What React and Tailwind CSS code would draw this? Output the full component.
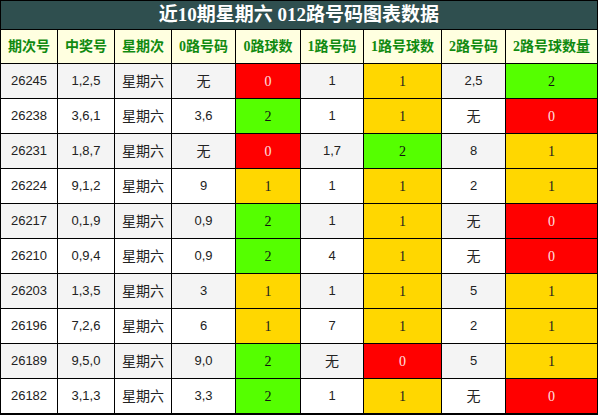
import React from "react";

const rows = [
  ["26245", "1,2,5", "无", 0, "1", 1, "2,5", 2],
  ["26238", "3,6,1", "3,6", 2, "1", 1, "无", 0],
  ["26231", "1,8,7", "无", 0, "1,7", 2, "8", 1],
  ["26224", "9,1,2", "9", 1, "1", 1, "2", 1],
  ["26217", "0,1,9", "0,9", 2, "1", 1, "无", 0],
  ["26210", "0,9,4", "0,9", 2, "4", 1, "无", 0],
  ["26203", "1,3,5", "3", 1, "1", 1, "5", 1],
  ["26196", "7,2,6", "6", 1, "7", 1, "2", 1],
  ["26189", "9,5,0", "9,0", 2, "无", 0, "5", 1],
  ["26182", "3,1,3", "3,3", 2, "1", 1, "无", 0],
];

const headers = ["期次号", "中奖号", "星期次", "0路号码", "0路球数", "1路号码", "1路号球数", "2路号码", "2路号球数量"];

function countCls(n) {
  if (n === 0) return "bg-[#ff0000] text-[#ffe0e0]";
  if (n === 1) return "bg-[#ffd700] text-[#222]";
  return "bg-[#55ff00] text-[#111]";
}

const sans = "font-['Liberation_Sans','Noto_Sans_CJK_SC',sans-serif]";
const serif = "font-['Liberation_Serif','Noto_Sans_CJK_SC',serif]";

export default function App() {
  return (
    <div className="w-[598px] h-[415px] bg-black p-px flex flex-col gap-px overflow-hidden">
      <div className={`h-[28px] bg-[#2f4f4f] text-white font-bold text-[19px] flex items-center justify-center ${serif}`}>
        近10期星期六 012路号码图表数据
      </div>
      <div className="grid grid-cols-[56px_56px_56px_63px_64px_62px_77px_63px_91px] gap-px">
        {headers.map((h) => (
          <div key={h} className={`h-[33px] bg-[#ffffe0] text-[#108a10] font-bold text-[14px] flex items-center justify-center ${serif}`}>
            {h}
          </div>
        ))}
        {rows.map((r, i) => {
          const bg = i % 2 === 0 ? "bg-[#f4f4f4]" : "bg-white";
          const plain = `h-[34px] ${bg} text-[#222] text-[13px] flex items-center justify-center ${sans}`;
          const cnt = (n) => `h-[34px] ${countCls(n)} text-[14px] flex items-center justify-center ${serif}`;
          return (
            <React.Fragment key={r[0]}>
              <div className={plain}>{r[0]}</div>
              <div className={plain}>{r[1]}</div>
              <div className={`${plain} text-[14px] text-[#111]`}>星期六</div>
              <div className={`${plain} ${r[2] === "无" ? "text-[14px] text-[#111]" : ""}`}>{r[2]}</div>
              <div className={cnt(r[3])}>{r[3]}</div>
              <div className={`${plain} ${r[4] === "无" ? "text-[14px] text-[#111]" : ""}`}>{r[4]}</div>
              <div className={cnt(r[5])}>{r[5]}</div>
              <div className={`${plain} ${r[6] === "无" ? "text-[14px] text-[#111]" : ""}`}>{r[6]}</div>
              <div className={cnt(r[7])}>{r[7]}</div>
            </React.Fragment>
          );
        })}
      </div>
    </div>
  );
}
